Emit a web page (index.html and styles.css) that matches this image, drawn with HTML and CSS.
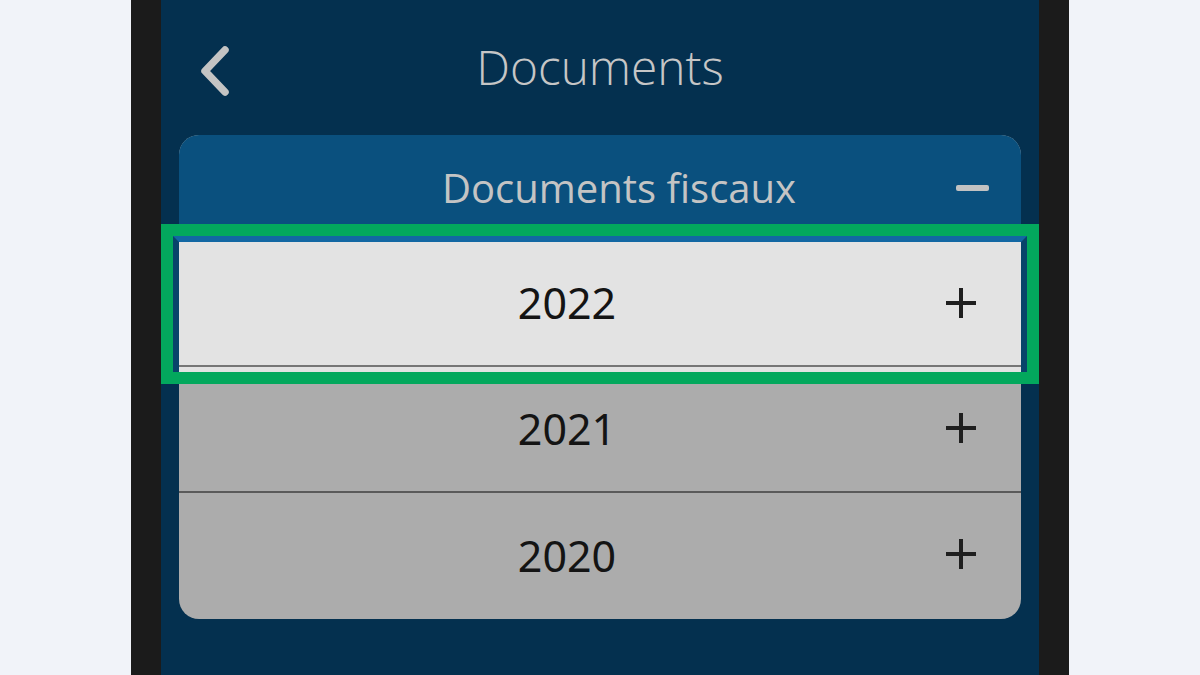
FILE: index.html
```html
<!DOCTYPE html>
<html lang="fr">
<head>
<meta charset="utf-8">
<title>Documents</title>
<link rel="stylesheet" href="styles.css">
</head>
<body>
<div class="page">
  <div class="phone">
    <div class="screen">
      <header class="topbar">
        <button class="back" aria-label="Retour">
          <svg width="40" height="60" viewBox="0 0 40 60"><polyline points="30,10 10,31 30,52" fill="none" stroke="#c4c4c4" stroke-width="7.5" stroke-linecap="round" stroke-linejoin="round"/></svg>
        </button>
        <h1 class="title">Documents</h1>
      </header>
      <section class="card">
        <div class="card-head">
          <span class="card-title">Documents fiscaux</span>
          <span class="minus"></span>
        </div>
        <div class="row row-active">
          <span class="year">2022</span>
          <svg class="plus" width="32" height="32" viewBox="0 0 32 32"><path d="M16 1V31M1 16H31" stroke="#1f1f1f" stroke-width="4"/></svg>
        </div>
        <div class="row row-mid">
          <span class="year">2021</span>
          <svg class="plus" width="32" height="32" viewBox="0 0 32 32"><path d="M16 1V31M1 16H31" stroke="#1f1f1f" stroke-width="4"/></svg>
        </div>
        <div class="row">
          <span class="year">2020</span>
          <svg class="plus" width="32" height="32" viewBox="0 0 32 32"><path d="M16 1V31M1 16H31" stroke="#1f1f1f" stroke-width="4"/></svg>
        </div>
      </section>
      <div class="highlight"><div class="highlight-inner"></div></div>
    </div>
  </div>
</div>
</body>
</html>
```

FILE: styles.css
```css
html, body {
  margin: 0;
  padding: 0;
}
body {
  background: #f1f3f9;
  font-family: "Noto Sans", "Open Sans", sans-serif;
  width: 1200px;
  height: 675px;
  overflow: hidden;
}
.page {
  display: flex;
  justify-content: center;
}
.phone {
  width: 878px;
  height: 675px;
  border-left: 30px solid #1b1b1b;
  border-right: 30px solid #1b1b1b;
}
.screen {
  position: relative;
  height: 675px;
  background: #04304f;
  display: flex;
  flex-direction: column;
}
.topbar {
  height: 135px;
  position: relative;
  display: flex;
  align-items: center;
  justify-content: center;
}
.back {
  position: absolute;
  left: 34px;
  top: 40px;
  background: none;
  border: 0;
  padding: 0;
  width: 40px;
  height: 60px;
}
.back svg { display: block; }
.title {
  margin: 0;
  font-family: "Open Sans", "Noto Sans", sans-serif;
  font-weight: 300;
  font-size: 47.8px;
  color: #c6c6c6;
  line-height: 1;
  transform: translateY(-1px);
}
.card {
  margin: 0 18px;
  border-radius: 20px;
  overflow: hidden;
  background: #acacac;
}
.card-head {
  height: 107px;
  background: #0a507e;
  display: flex;
  align-items: center;
  justify-content: center;
  padding-left: 38px;
  position: relative;
}
.card-title {
  font-family: "Open Sans", "Noto Sans", sans-serif;
  font-weight: 400;
  font-size: 40px;
  color: #c4c4c4;
  transform: translateY(-1px);
}
.minus {
  position: absolute;
  right: 32px;
  top: 50px;
  width: 33px;
  height: 6px;
  border-radius: 2px;
  background: #c2c2c2;
}
.row {
  height: 126px;
  display: flex;
  align-items: center;
  justify-content: center;
  padding-right: 66px;
  position: relative;
  box-sizing: border-box;
}
.row-active {
  height: 125px;
  background: #e3e3e3;
  border-bottom: 2px solid #767676;
}
.row-mid {
  height: 126px;
  border-bottom: 2px solid #5a5a5a;
}
.year {
  font-size: 43px;
  color: #141414;
  transform: translateY(-1px);
}
.plus {
  position: absolute;
  right: 44px;
  top: 45px;
}
.highlight {
  position: absolute;
  left: 0;
  top: 224px;
  width: 878px;
  height: 160px;
  box-sizing: border-box;
  border: 12px solid #03a85d;
  pointer-events: none;
}
.highlight-inner {
  height: 136px;
  box-sizing: border-box;
  border-left: 6px solid #08446a;
  border-right: 6px solid #08446a;
  border-top: 6px solid #1267a3;
  position: relative;
}
.highlight-inner::after {
  content: "";
  position: absolute;
  left: 0;
  right: 0;
  bottom: 0;
  height: 5px;
  background: #e3e3e3;
}
```
